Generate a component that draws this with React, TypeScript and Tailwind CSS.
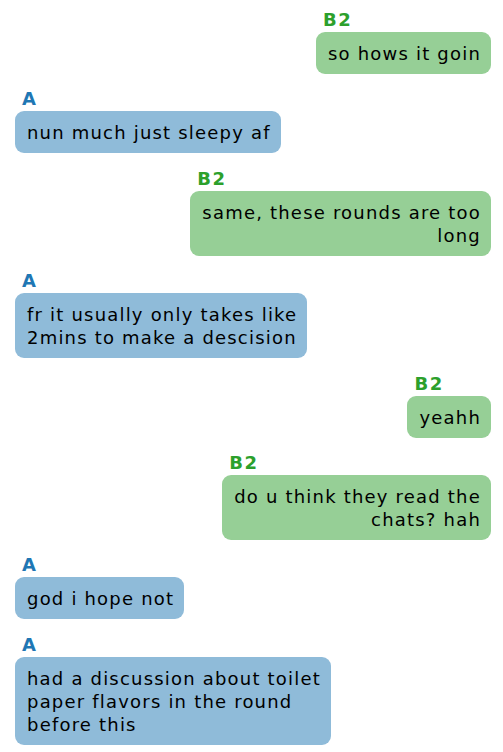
const messages = [
  { who: "B2", lines: ["so hows it goin"] },
  { who: "A", lines: ["nun much just sleepy af"] },
  { who: "B2", lines: ["same, these rounds are too", "long"] },
  { who: "A", lines: ["fr it usually only takes like", "2mins to make a descision"] },
  { who: "B2", lines: ["yeahh"] },
  { who: "B2", lines: ["do u think they read the", "chats? hah"] },
  { who: "A", lines: ["god i hope not"] },
  { who: "A", lines: ["had a discussion about toilet", "paper flavors in the round", "before this"] },
];

export default function App() {
  return (
    <div
      className="w-[503px] h-[752px] bg-white pl-[15px] pr-[12px] pt-[10px] flex flex-col gap-[15.4px] overflow-hidden"
      style={{ fontFamily: '"DejaVu Sans", sans-serif' }}
    >
      {messages.map((m, i) => {
        const mine = m.who === "B2";
        return (
          <div key={i} className={`flex ${mine ? "justify-end" : "justify-start"}`}>
            <div className="flex flex-col w-fit">
              <div
                className={`pl-[7px] text-[18px] leading-[20px] font-bold tracking-[1.5px] ${
                  mine ? "text-[#2ca02c]" : "text-[#1f77b4]"
                }`}
              >
                {m.who}
              </div>
              <div
                className={`mt-[2px] rounded-[9px] pl-[12px] pr-[10px] pt-[10px] pb-[9px] text-[18px] leading-[23px] tracking-[1.2px] text-black whitespace-nowrap ${
                  mine ? "bg-[#96cf96] text-right" : "bg-[#8fbbd9] text-left"
                }`}
              >
                {m.lines.map((l, j) => (
                  <div key={j}>{l}</div>
                ))}
              </div>
            </div>
          </div>
        );
      })}
    </div>
  );
}
